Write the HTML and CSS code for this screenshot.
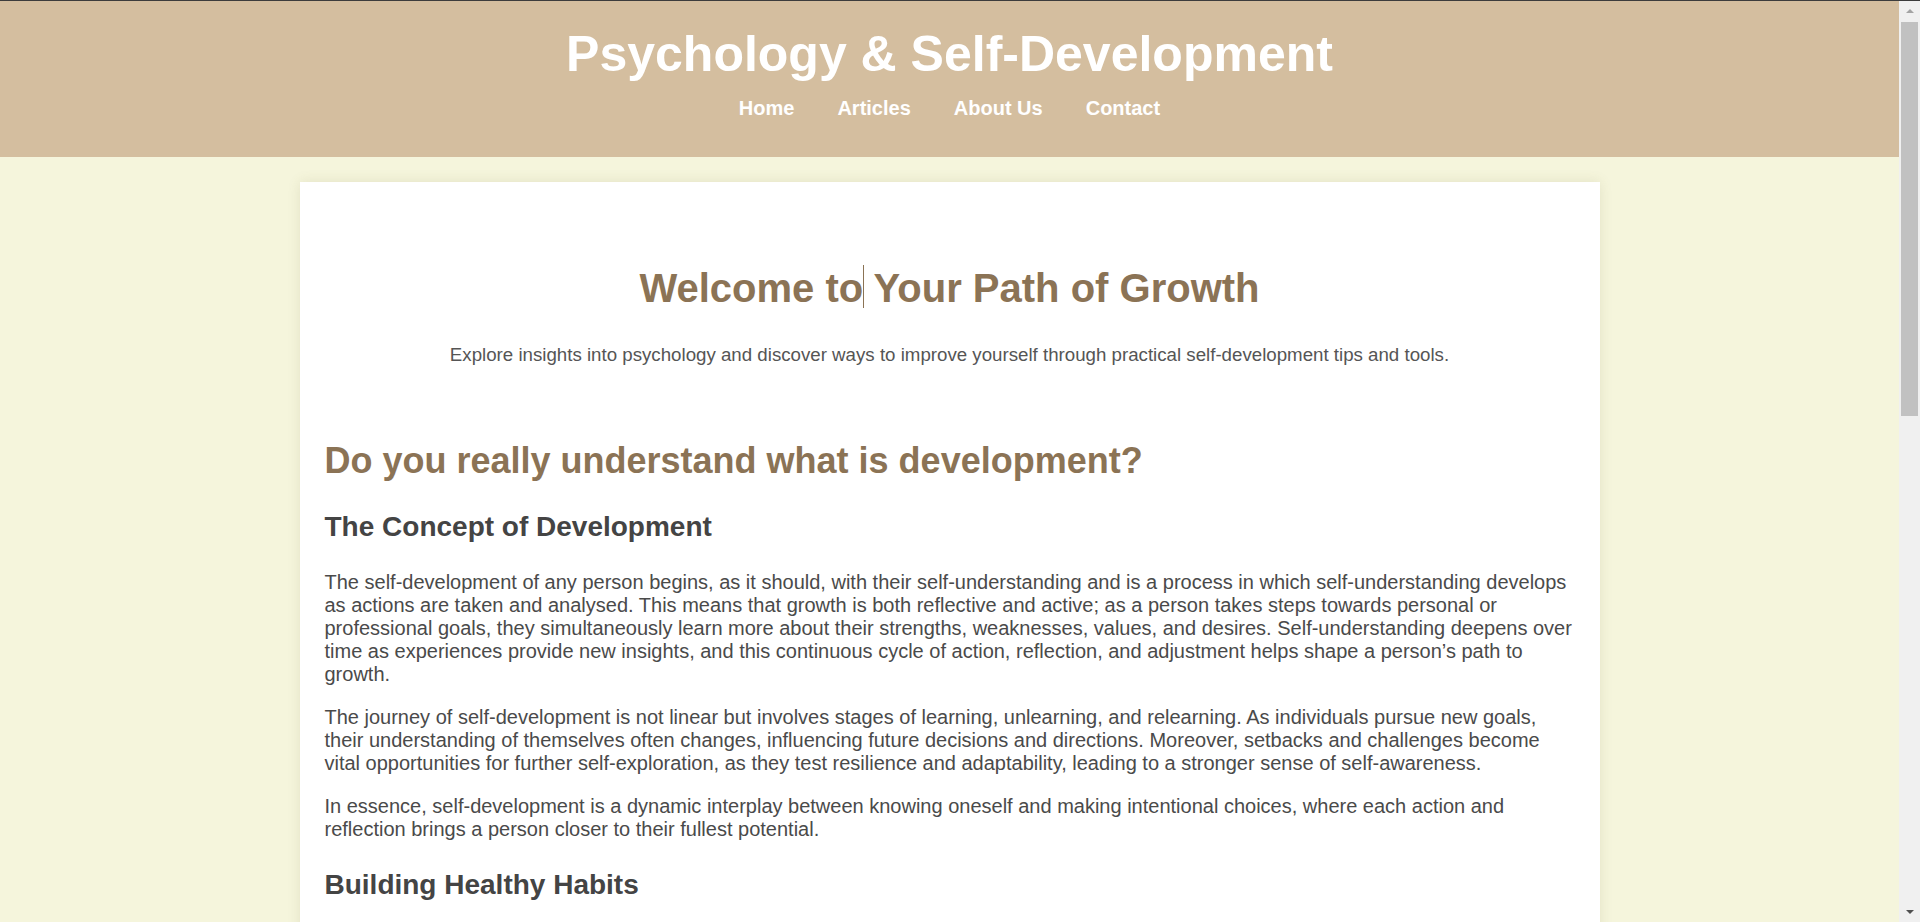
FILE: index.html
```html
<!DOCTYPE html>
<html lang="en">
<head>
<meta charset="utf-8">
<title>Psychology &amp; Self-Development</title>
<link rel="stylesheet" href="styles.css">
</head>
<body>
<header class="site-header">
  <h1 class="site-title">Psychology &amp; Self-Development</h1>
  <nav class="site-nav">
    <a class="nav-link" href="#">Home</a>
    <a class="nav-link" href="#">Articles</a>
    <a class="nav-link" href="#">About Us</a>
    <a class="nav-link" href="#">Contact</a>
  </nav>
</header>

<main class="card">
  <section class="hero">
    <h2 class="hero-title">Welcome to<span class="caret"></span> Your Path of Growth</h2>
    <p class="hero-sub">Explore insights into psychology and discover ways to improve yourself through practical self-development tips and tools.</p>
  </section>

  <section class="article">
    <h2 class="article-title">Do you really understand what is development?</h2>

    <h3 class="article-sub">The Concept of Development</h3>
    <p class="text">The self-development of any person begins, as it should, with their self-understanding and is a process in which self-understanding develops as actions are taken and analysed. This means that growth is both reflective and active; as a person takes steps towards personal or professional goals, they simultaneously learn more about their strengths, weaknesses, values, and desires. Self-understanding deepens over time as experiences provide new insights, and this continuous cycle of action, reflection, and adjustment helps shape a person’s path to growth.</p>
    <p class="text">The journey of self-development is not linear but involves stages of learning, unlearning, and relearning. As individuals pursue new goals, their understanding of themselves often changes, influencing future decisions and directions. Moreover, setbacks and challenges become vital opportunities for further self-exploration, as they test resilience and adaptability, leading to a stronger sense of self-awareness.</p>
    <p class="text">In essence, self-development is a dynamic interplay between knowing oneself and making intentional choices, where each action and reflection brings a person closer to their fullest potential.</p>

    <h3 class="article-sub">Building Healthy Habits</h3>
    <p class="text">Habits are the small, repeated actions that quietly shape who we become. Building healthy habits starts with clarity about what matters most and with choosing behaviours that support those values. Rather than attempting dramatic changes overnight, lasting progress usually comes from small, consistent steps that are easy to repeat every day.</p>
    <p class="text">Tracking progress, celebrating small wins, and being patient with setbacks all help new routines take root. Over time, these habits become automatic, freeing energy for new goals and reinforcing a positive sense of identity.</p>

    <h3 class="article-sub">Emotional Awareness</h3>
    <p class="text">Understanding our emotions is a key part of personal growth. Emotions carry information about our needs, boundaries, and priorities. By learning to notice, name, and accept what we feel, we gain the ability to respond thoughtfully instead of reacting automatically, which improves relationships and decision-making alike.</p>
    <p class="text">Practices such as journaling, mindfulness, and honest conversations with trusted people can deepen emotional awareness and make it easier to navigate difficult situations with calm and confidence.</p>

    <h3 class="article-sub">Setting Meaningful Goals</h3>
    <p class="text">Meaningful goals connect daily actions to a larger sense of purpose. When goals reflect personal values rather than external expectations, motivation becomes more stable and resilient. Breaking larger ambitions into clear, achievable steps helps maintain focus and provides regular opportunities to reflect and adjust.</p>
    <p class="text">Revisiting goals regularly ensures that they continue to match who we are becoming, keeping the path of growth both flexible and intentional.</p>
  </section>
</main>

<footer class="site-footer">
  <p class="footer-text">© 2024 Psychology &amp; Self-Development. All rights reserved.</p>
</footer>

<div class="scrollbar" aria-hidden="true">
  <span class="sb-btn sb-up"></span>
  <span class="sb-thumb"></span>
  <span class="sb-track"></span>
  <span class="sb-btn sb-down"></span>
</div>
</body>
</html>
```

FILE: styles.css
```css
html {
  background: #f5f5dc;
}

body {
  margin: 0 21px 0 0;
  background: #f5f5dc;
  font-family: "Liberation Sans", Arial, sans-serif;
  color: #444;
}

.site-header {
  background: #d4be9f;
  border-top: 1px solid #3c3c3c;
  padding: 24px 0 37px;
  text-align: center;
}

.site-title {
  margin: 0 0 14px;
  font-size: 50px;
  font-weight: bold;
  color: #ffffff;
}

.site-nav {
  display: flex;
  justify-content: center;
  gap: 43px;
}

.nav-link {
  color: #ffffff;
  font-size: 20px;
  font-weight: bold;
  text-decoration: none;
}

.card {
  display: block;
  max-width: 1300px;
  margin: 25px auto;
  padding: 25px;
  box-sizing: border-box;
  background: #ffffff;
  box-shadow: 0 0 12px rgba(120, 110, 60, 0.14);
}

.hero {
  text-align: center;
  padding: 58px 0 44px;
}

.hero-title {
  margin: 0 0 33px;
  font-size: 40px;
  color: #8b7355;
}

.caret {
  display: inline-block;
  width: 1px;
  height: 43px;
  margin-right: -1px;
  vertical-align: -6px;
  background: #8b7355;
}

.hero-sub {
  margin: 0;
  font-size: 18.7px;
  color: #555555;
}

.article-title {
  margin: 30px 0 28.5px;
  font-size: 36px;
  color: #8b7355;
}

.article-sub {
  margin: 28px 0;
  font-size: 28px;
  color: #444444;
}

.text {
  margin: 20px 0;
  font-size: 20px;
  color: #4a4a4a;
}

.site-footer {
  background: #d4be9f;
  padding: 20px 0;
  text-align: center;
}

.footer-text {
  margin: 0;
  color: #ffffff;
  font-size: 16px;
}

/* browser scrollbar drawn over the right edge of the window */
.scrollbar {
  position: fixed;
  top: 0;
  right: 0;
  width: 21px;
  height: 100vh;
  box-sizing: border-box;
  border-top: 1px solid #3c3c3c;
  background: #f0f0f0;
  display: flex;
  flex-direction: column;
  align-items: center;
}

.sb-btn {
  flex: 0 0 20px;
  width: 21px;
  display: flex;
  align-items: center;
  justify-content: center;
}

.sb-up::before {
  content: "";
  border-left: 4px solid transparent;
  border-right: 4px solid transparent;
  border-bottom: 4px solid #a3a3a3;
}

.sb-down::before {
  content: "";
  border-left: 4px solid transparent;
  border-right: 4px solid transparent;
  border-top: 4px solid #505050;
}

.sb-thumb {
  flex: 0 0 394px;
  width: 17px;
  margin-top: 1px;
  background: #c1c1c1;
}

.sb-track {
  flex: 1 1 auto;
}
```
